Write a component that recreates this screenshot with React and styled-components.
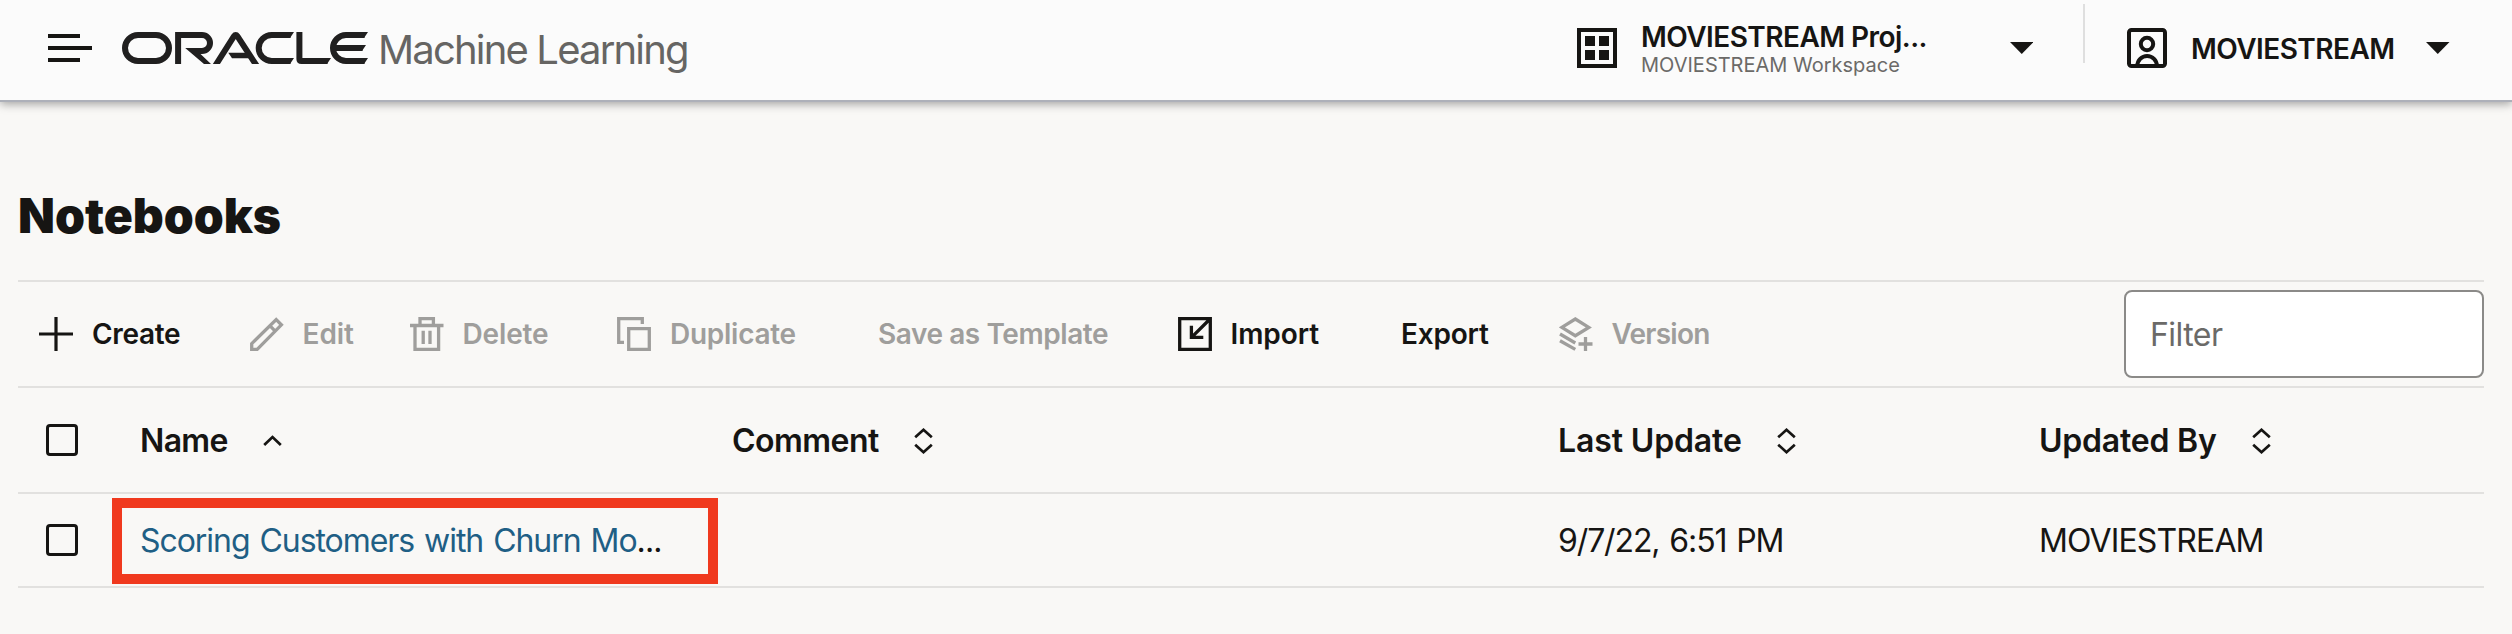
import React from "react";
import styled, { createGlobalStyle } from "styled-components";

const ink = "#161513";
const muted = "#6b6a68";
const disabled = "#9f9e9c";
const line = "#e2e1df";

const GlobalStyle = createGlobalStyle`
  body {
    margin: 0;
    background: #f9f8f6;
    color: ${ink};
    font-family: Inter, "Liberation Sans", sans-serif;
  }
  svg { display: block; flex: none; }
`;

const Page = styled.div`
  min-height: 634px;
  overflow: hidden;
`;

const Header = styled.header`
  box-sizing: border-box;
  height: 102px;
  padding: 0 62.5px 4px 48px;
  display: flex;
  align-items: center;
  background: #fbfbfb;
  border-bottom: 2px solid #adb0b9;
  box-shadow: 0 2px 9px rgba(0, 0, 0, 0.36);
`;

const Brand = styled.div`
  display: flex;
  align-items: center;
  margin-left: 30px;
  gap: 10px;
`;

const ProductName = styled.span`
  font-size: 40px;
  line-height: 48px;
  letter-spacing: -1.83px;
  color: #666563;
  padding-top: 3px;
  white-space: nowrap;
`;

const HeaderMenu = styled.button`
  display: flex;
  align-items: center;
  padding: 0;
  border: 0;
  background: none;
  color: inherit;
  font: inherit;
  text-align: left;
  margin-left: ${(p) => p.$lead};
`;

const MenuText = styled.span`
  display: flex;
  flex-direction: column;
  box-sizing: border-box;
  width: ${(p) => p.$width}px;
  padding-left: 24px;
  white-space: nowrap;
`;

const MenuTitle = styled.span`
  font-size: 28px;
  font-weight: 600;
  line-height: 34px;
  letter-spacing: -0.54px;
  padding-top: ${(p) => p.$drop || 0}px;
`;

const MenuSubtitle = styled.span`
  font-size: 20px;
  line-height: 22px;
  color: ${muted};
`;

const Divider = styled.span`
  align-self: flex-start;
  width: 2px;
  height: 59px;
  margin: 4px 0 0 50px;
  background: #dfdfdf;
`;

const Main = styled.main`
  padding: 86px 28px 0 18px;
`;

const Title = styled.h1`
  margin: 0 0 36px;
  font-size: 48px;
  font-weight: 900;
  line-height: 56px;
`;

const Toolbar = styled.div`
  display: flex;
  align-items: center;
  height: 104px;
  padding-left: 21px;
  border-top: 2px solid ${line};
  border-bottom: 2px solid ${line};
`;

const ToolButton = styled.button`
  display: flex;
  align-items: center;
  gap: 19px;
  box-sizing: border-box;
  width: ${(p) => p.$width}px;
  padding: 0;
  border: 0;
  background: none;
  font: 600 28px/34px Inter, "Liberation Sans", sans-serif;
  letter-spacing: ${(p) => p.$tracking}px;
  color: ${(p) => (p.disabled ? disabled : ink)};
  white-space: nowrap;
`;

const FilterInput = styled.input`
  box-sizing: border-box;
  width: 360px;
  height: 88px;
  margin-left: auto;
  padding: 0 24px;
  border: 2px solid #8b8a88;
  border-radius: 8px;
  background: #fff;
  font: 400 32px/40px Inter, "Liberation Sans", sans-serif;
  letter-spacing: -0.55px;
  &::placeholder { color: ${muted}; opacity: 1; }
`;

const Row = styled.div`
  display: grid;
  grid-template-columns: 122px 592px 826px 481px 1fr;
  align-items: center;
  height: ${(p) => p.$height}px;
  border-bottom: 2px solid ${line};
`;

const Checkbox = styled.span`
  box-sizing: border-box;
  width: 32px;
  height: 32px;
  margin-left: 28px;
  border: 3px solid ${ink};
  border-radius: 4px;
`;

const HeadCell = styled.div`
  display: flex;
  align-items: center;
  gap: 35px;
  font-size: 32px;
  font-weight: 600;
  line-height: 40px;
  letter-spacing: ${(p) => p.$tracking}px;
  padding-top: 1px;
`;

const Cell = styled.div`
  position: relative;
  display: flex;
  align-items: center;
  box-sizing: border-box;
  height: 100%;
  padding-top: 2px;
  font-size: 32px;
  line-height: 40px;
  letter-spacing: ${(p) => p.$tracking || -0.87}px;
  word-spacing: 2px;
  white-space: nowrap;
`;

const NotebookLink = styled.a`
  color: #1f5f85;
  letter-spacing: -1.05px;
`;

const Highlight = styled.span`
  position: absolute;
  left: -28px;
  top: 4px;
  box-sizing: border-box;
  width: 606px;
  height: 86px;
  border: 10px solid #f0391e;
`;

const MenuIcon = () => (
  <svg width="44" height="28" fill={ink}>
    <rect width="32" height="4" />
    <rect y="12" width="44" height="4" />
    <rect y="24" width="32" height="4" />
  </svg>
);

const OracleLogo = () => (
  <svg width="246" height="32" viewBox="0 0 246 32" fill="none" stroke="#201f1f" strokeWidth="6" role="img" aria-label="Oracle">
    <rect x="3" y="3" width="44" height="26" rx="13" />
    <path d="M56.1 32V3H80a8 8 0 0 1 0 16H70" />
    <path d="M92.5 35L112 4.2Q113.7 1.8 115.4 4.2L135.5 35" />
    <path d="M168.5 3H149.7a13 13 0 0 0 0 26H168.5" />
    <path d="M177.4 0V27Q177.4 29 179.5 29H205.5" />
    <path d="M242.5 3H224a13 13 0 0 0 0 26H242.5M212 16H240.5" />
    <g fill="#201f1f" stroke="none">
      <path d="M63.2 16H78V21.5L89 32H82Z" />
      <path d="M106.3 20.7H126L130 26.3H110Z" />
      <path d="M168 0H172L168 6ZM168 26H172L168 32ZM205 26H209L205 32ZM242 0H246L242 6ZM242 26H246L242 32ZM240 13H244L240 19Z" />
    </g>
  </svg>
);

const ProjectIcon = () => (
  <svg width="40" height="40" fill={ink}>
    <path fillRule="evenodd" d="M0 0H40V40H0ZM4 4V36H36V4Z" />
    <path d="M8 8H18V18H8ZM22 8H32V18H22ZM8 22H18V32H8ZM22 22H32V32H22Z" />
  </svg>
);

const UserIcon = () => (
  <svg width="40" height="40" fill="none" stroke={ink} strokeWidth="4">
    <rect x="2" y="2" width="36" height="36" rx="2.5" />
    <circle cx="20" cy="16" r="6.2" />
    <path d="M10.3 38a9.8 10 0 0 1 19.6 0" />
  </svg>
);

const Caret = () => (
  <svg width="23.5" height="12" viewBox="0 0 23.5 12" fill={ink}>
    <path d="M0 0H23.5L11.75 12Z" />
  </svg>
);

const glyphs = {
  plus: <path strokeWidth="3.2" d="M17 0V34M0 17H34" />,
  pencil: <path d="M1.7 32.3V26.6L26.2 2.6L31.4 7.8L7.2 32.3ZM19.8 8.7L25.2 14.1" />,
  trash: <path d="M0 8.5H33.5M10 8.5V1.7H23.4V8.5M5 8.5V32.3H28.6V8.5M13.2 13.7V27M20 13.7V27" />,
  duplicate: <path d="M7 25.3H1.7V1.7H25.3V7M11.7 11.7H32.3V32.3H11.7Z" />,
  import: <path d="M1.7 1.7H32.3V32.3H1.7ZM32 2L13.8 20.2M13.4 8.7V20.3H25.3" />,
  version: <path d="M16.3 2L29.8 10.4L16.3 18.7L2.8 10.4ZM1 17L16.3 26M1 23.7L16.3 32.4M26.5 20V34M19.5 27H33.5" />,
};

const ToolIcon = ({ name }) => (
  <svg width="34" height="34" viewBox="0 0 34 34" fill="none" stroke="currentColor" strokeWidth="3.3">
    {glyphs[name]}
  </svg>
);

const SortIcon = ({ ascending }) => (
  <svg width="19" height="26" viewBox="0 0 19 26" fill="none" stroke={ink} strokeWidth="2.7">
    <path d={ascending ? "M1.2 17L9.5 9L17.8 17" : "M1.2 9.3L9.5 1.8L17.8 9.3M1.2 16.7L9.5 24.2L17.8 16.7"} />
  </svg>
);

const actions = [
  { label: "Create", icon: "plus", width: 210.5, tracking: -0.33 },
  { label: "Edit", icon: "pencil", width: 160, tracking: -0.05, disabled: true },
  { label: "Delete", icon: "trash", width: 207.5, tracking: -0.15, disabled: true },
  { label: "Duplicate", icon: "duplicate", width: 261, tracking: -0.27, disabled: true },
  { label: "Save as Template", width: 299.5, tracking: -0.43, disabled: true },
  { label: "Import", icon: "import", width: 223.5, tracking: -0.08 },
  { label: "Export", width: 157.5, tracking: -0.2 },
  { label: "Version", icon: "version", width: 152, tracking: -0.75, disabled: true },
];

const columns = [
  { label: "Name", tracking: -0.66, ascending: true },
  { label: "Comment", tracking: -0.53 },
  { label: "Last Update", tracking: -0.13 },
  { label: "Updated By", tracking: -0.21 },
];

export default function App() {
  return (
    <Page>
      <GlobalStyle />
      <Header>
        <MenuIcon />
        <Brand>
          <OracleLogo />
          <ProductName>Machine Learning</ProductName>
        </Brand>
        <HeaderMenu $lead="auto">
          <ProjectIcon />
          <MenuText $width={392.5}>
            <MenuTitle>MOVIESTREAM Proj...</MenuTitle>
            <MenuSubtitle>MOVIESTREAM Workspace</MenuSubtitle>
          </MenuText>
          <Caret />
        </HeaderMenu>
        <Divider />
        <HeaderMenu $lead="42px">
          <UserIcon />
          <MenuText $width={259}>
            <MenuTitle $drop={2}>MOVIESTREAM</MenuTitle>
          </MenuText>
          <Caret />
        </HeaderMenu>
      </Header>
      <Main>
        <Title>Notebooks</Title>
        <Toolbar>
          {actions.map((a) => (
            <ToolButton key={a.label} $width={a.width} $tracking={a.tracking} disabled={a.disabled}>
              {a.icon && <ToolIcon name={a.icon} />}
              <span>{a.label}</span>
            </ToolButton>
          ))}
          <FilterInput placeholder="Filter" />
        </Toolbar>
        <Row $height={104}>
          <Checkbox />
          {columns.map((c) => (
            <HeadCell key={c.label} $tracking={c.tracking}>
              {c.label}
              <SortIcon ascending={c.ascending} />
            </HeadCell>
          ))}
        </Row>
        <Row $height={92}>
          <Checkbox />
          <Cell>
            <NotebookLink>Scoring Customers with Churn Mo</NotebookLink>...
            <Highlight />
          </Cell>
          <Cell />
          <Cell $tracking={-1.12}>9/7/22, 6:51 PM</Cell>
          <Cell>MOVIESTREAM</Cell>
        </Row>
      </Main>
    </Page>
  );
}
